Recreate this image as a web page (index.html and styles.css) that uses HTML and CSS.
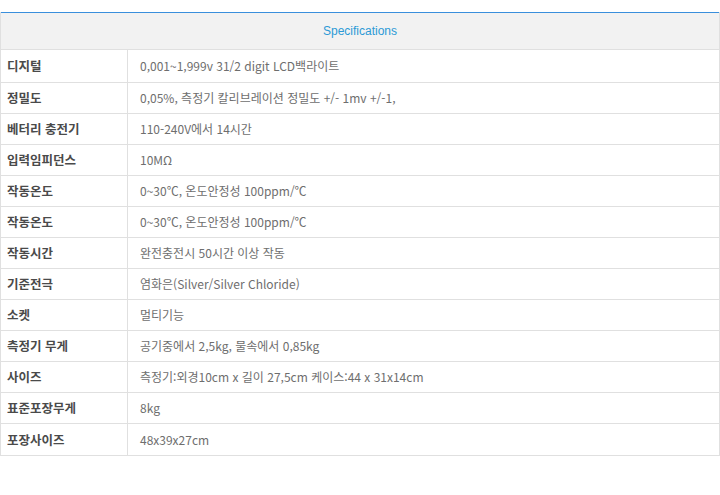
FILE: index.html
```html
<!DOCTYPE html>
<html lang="ko">
<head>
<meta charset="utf-8">
<title>Specifications</title>
<link rel="stylesheet" href="styles.css">
</head>
<body>
<div class="page">
  <table class="spec">
    <colgroup>
      <col class="col-label">
      <col class="col-value">
    </colgroup>
    <thead>
      <tr><th colspan="2" class="spec-title">Specifications</th></tr>
    </thead>
    <tbody>
      <tr class="first"><th>디지털</th><td>0,001~1,999v 31/2 digit LCD백라이트</td></tr>
      <tr><th>정밀도</th><td>0,05%, 측정기 칼리브레이션 정밀도 +/- 1mv +/-1,</td></tr>
      <tr><th>베터리 충전기</th><td>110-240V에서 14시간</td></tr>
      <tr><th>입력임피던스</th><td>10MΩ</td></tr>
      <tr><th>작동온도</th><td>0~30℃, 온도안정성 100ppm/℃</td></tr>
      <tr><th>작동온도</th><td>0~30℃, 온도안정성 100ppm/℃</td></tr>
      <tr><th>작동시간</th><td>완전충전시 50시간 이상 작동</td></tr>
      <tr><th>기준전극</th><td>염화은(Silver/Silver Chloride)</td></tr>
      <tr><th>소켓</th><td>멀티기능</td></tr>
      <tr><th>측정기 무게</th><td>공기중에서 2,5kg, 물속에서 0,85kg</td></tr>
      <tr><th>사이즈</th><td>측정기:외경10cm x 길이 27,5cm 케이스:44 x 31x14cm</td></tr>
      <tr><th>표준포장무게</th><td>8kg</td></tr>
      <tr class="last"><th>포장사이즈</th><td>48x39x27cm</td></tr>
    </tbody>
  </table>
</div>
</body>
</html>
```

FILE: styles.css
```css
html, body {
  margin: 0;
  padding: 0;
  background: #ffffff;
}

.page {
  padding-top: 12px;
  width: 720px;
}

.spec {
  width: 720px;
  border-collapse: collapse;
  table-layout: fixed;
  font-family: "Noto Sans CJK KR", "Noto Sans", sans-serif;
  font-size: 12px;
  border-top: 1px solid #3a8fdc;
}

.col-label {
  width: 127px;
}

.spec th,
.spec td {
  border: 1px solid #e0e0e0;
  padding: 0;
  height: 30px;
  box-sizing: border-box;
  vertical-align: middle;
  text-align: left;
  line-height: 14px;
}

.spec .spec-title {
  border-top: none;
  background: #f2f2f2;
  height: 37px;
  text-align: center;
  color: #2c9ad6;
  font-weight: normal;
  font-family: "Liberation Sans", "Noto Sans", sans-serif;
  font-size: 12px;
}

.spec tbody th {
  padding-left: 6px;
  color: #4a4a4a;
  font-weight: bold;
  font-size: 12.5px;
}

.spec tbody td {
  padding-left: 12px;
  color: #6e6e6e;
  font-size: 12px;
}

.spec tbody tr {
  height: 31px;
}

.spec tbody tr.first {
  height: 33px;
}

.spec tbody tr.last {
  height: 32px;
}
```
